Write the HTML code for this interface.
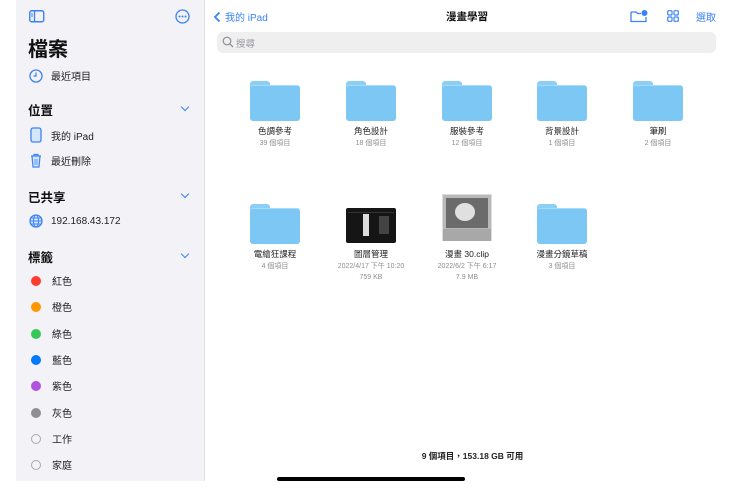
<!DOCTYPE html>
<html><head><meta charset="utf-8"><style>
*{margin:0;padding:0;box-sizing:border-box}
body{width:740px;height:489px;background:#fff;position:relative;overflow:hidden;font-family:"Liberation Sans","Noto Sans CJK TC",sans-serif;color:#111}
.a{position:absolute}
#sb{left:16px;top:0;width:189px;height:481px;background:#f2f2f7;border-right:1px solid #e0e0e5}
.row{position:absolute;left:28px;font-size:10px;color:#222;display:flex;align-items:center}
.hd{position:absolute;left:28px;font-size:12.5px;font-weight:bold;color:#111}
.chev{position:absolute;left:182px;width:6px;height:6px;border-right:1.5px solid #3b82f6;border-bottom:1.5px solid #3b82f6;transform:rotate(45deg)}
.dot{width:10px;height:10px;border-radius:50%;margin-right:11px;margin-left:3px}
.ic{width:15px;margin-right:8px;display:flex;justify-content:center}
.it{position:absolute;width:96px;text-align:center}
.fold{position:relative;width:50px;height:40px;margin:0 auto}
.fold .t{position:absolute;left:0;top:0;width:20px;height:8px;background:#8ccff6;border-radius:3px 3px 0 0}
.fold .b{position:absolute;left:0;top:4px;width:50px;height:36px;background:#7cc7f3;border-radius:3px;border-top:1.5px solid #a6dbf9}
.nm{font-size:8.5px;color:#222;margin-top:4px}
.sub{font-size:7px;color:#8e8e93;margin-top:1px;line-height:11px}
</style></head><body>
<div id="sb" class="a"></div>
<svg class="a" style="left:29px;top:10px" width="16" height="13"><rect x="0.75" y="0.75" width="14" height="11" rx="2" fill="none" stroke="#3b82f6" stroke-width="1.4"/><line x1="5.5" y1="1" x2="5.5" y2="12" stroke="#3b82f6" stroke-width="1.3"/><line x1="2" y1="4" x2="4" y2="4" stroke="#3b82f6"/><line x1="2" y1="6" x2="4" y2="6" stroke="#3b82f6"/></svg>
<svg class="a" style="left:175px;top:9px" width="15" height="15"><circle cx="7.5" cy="7.5" r="6.5" fill="none" stroke="#3b82f6" stroke-width="1.3"/><circle cx="4.5" cy="7.5" r="1" fill="#3b82f6"/><circle cx="7.5" cy="7.5" r="1" fill="#3b82f6"/><circle cx="10.5" cy="7.5" r="1" fill="#3b82f6"/></svg>
<div class="a" style="left:28px;top:33px;font-size:20px;font-weight:bold">檔案</div>
<div class="row" style="top:68px"><span class="ic"><svg width="14" height="14"><circle cx="7" cy="7" r="6" fill="none" stroke="#3b82f6" stroke-width="1.3"/><path d="M7 3.5V7H4.5" fill="none" stroke="#3b82f6" stroke-width="1.2"/></svg></span>最近項目</div>
<div class="hd" style="top:100px">位置</div><div class="chev" style="top:104px"></div>
<div class="row" style="top:127px"><span class="ic"><svg width="12" height="16"><rect x="1" y="1" width="10" height="14" rx="2" fill="#d6e7fc" stroke="#3b82f6" stroke-width="1.3"/></svg></span>我的 iPad</div>
<div class="row" style="top:153px"><span class="ic"><svg width="12" height="15"><path d="M1 3h10M4 3V1.5h4V3M2 3l1 11h6l1-11" fill="#d6e7fc" stroke="#3b82f6" stroke-width="1.2"/><path d="M5 6v6M7 6v6" stroke="#3b82f6" stroke-width=".8"/></svg></span>最近刪除</div>
<div class="hd" style="top:187px">已共享</div><div class="chev" style="top:191px"></div>
<div class="row" style="top:214px"><span class="ic"><svg width="14" height="14"><circle cx="7" cy="7" r="6" fill="#d6e7fc" stroke="#3b82f6" stroke-width="1.3"/><ellipse cx="7" cy="7" rx="2.5" ry="6" fill="none" stroke="#3b82f6"/><path d="M1 7h12M2 4h10M2 10h10" stroke="#3b82f6" stroke-width=".9"/></svg></span>192.168.43.172</div>
<div class="hd" style="top:247px">標籤</div><div class="chev" style="top:251px"></div>
<div class="row" style="top:273px"><span class="dot" style="background:#ff3b30"></span>紅色</div>
<div class="row" style="top:299px"><span class="dot" style="background:#ff9500"></span>橙色</div>
<div class="row" style="top:326px"><span class="dot" style="background:#34c759"></span>綠色</div>
<div class="row" style="top:352px"><span class="dot" style="background:#007aff"></span>藍色</div>
<div class="row" style="top:378px"><span class="dot" style="background:#af52de"></span>紫色</div>
<div class="row" style="top:405px"><span class="dot" style="background:#8e8e93"></span>灰色</div>
<div class="row" style="top:431px"><span class="dot" style="border:1px solid #aaa"></span>工作</div>
<div class="row" style="top:457px"><span class="dot" style="border:1px solid #aaa"></span>家庭</div>

<div class="a" style="left:213px;top:9px;font-size:10px;color:#3b82f6;display:flex;align-items:center"><svg width="9" height="12" style="margin-right:3px"><path d="M6.5 1.5L2 6l4.5 4.5" fill="none" stroke="#3b82f6" stroke-width="1.8"/></svg>我的 iPad</div>
<div class="a" style="left:446px;top:9px;font-size:10.5px;font-weight:bold">漫畫學習</div>
<svg class="a" style="left:630px;top:9px" width="18" height="14"><path d="M1 3h5l1.5 1.5H11M1 3v9.5h15V8" fill="none" stroke="#3b82f6" stroke-width="1.3"/><circle cx="14.5" cy="4" r="3" fill="#3b82f6"/></svg>
<svg class="a" style="left:667px;top:10px" width="12" height="12" fill="none" stroke="#3b82f6" stroke-width="1.2"><rect x=".7" y=".7" width="4.3" height="4.3" rx="1"/><rect x="7" y=".7" width="4.3" height="4.3" rx="1"/><rect x=".7" y="7" width="4.3" height="4.3" rx="1"/><rect x="7" y="7" width="4.3" height="4.3" rx="1"/></svg>
<div class="a" style="left:696px;top:9px;font-size:10px;color:#3b82f6">選取</div>
<div class="a" style="left:217px;top:32px;width:499px;height:21px;background:#efeff0;border-radius:6px"></div>
<svg class="a" style="left:222px;top:36px" width="12" height="12"><circle cx="5" cy="5" r="3.8" fill="none" stroke="#8e8e93" stroke-width="1.2"/><path d="M7.8 7.8L11 11" stroke="#8e8e93" stroke-width="1.3"/></svg>
<div class="a" style="left:236px;top:36px;font-size:9.5px;color:#9a9aa0">搜尋</div>

<div class="it" style="left:227px;top:81px"><div class="fold"><div class="t"></div><div class="b"></div></div><div class="nm">色調參考</div><div class="sub">39 個項目</div></div>
<div class="it" style="left:323px;top:81px"><div class="fold"><div class="t"></div><div class="b"></div></div><div class="nm">角色設計</div><div class="sub">18 個項目</div></div>
<div class="it" style="left:419px;top:81px"><div class="fold"><div class="t"></div><div class="b"></div></div><div class="nm">服裝參考</div><div class="sub">12 個項目</div></div>
<div class="it" style="left:514px;top:81px"><div class="fold"><div class="t"></div><div class="b"></div></div><div class="nm">背景設計</div><div class="sub">1 個項目</div></div>
<div class="it" style="left:610px;top:81px"><div class="fold"><div class="t"></div><div class="b"></div></div><div class="nm">筆刷</div><div class="sub">2 個項目</div></div>

<div class="it" style="left:227px;top:204px"><div class="fold"><div class="t"></div><div class="b"></div></div><div class="nm">電繪狂課程</div><div class="sub">4 個項目</div></div>
<div class="it" style="left:323px;top:204px"><div class="fold"><div style="position:absolute;left:0;top:4px;width:50px;height:35px;background:#151515;border-radius:2px"><div style="position:absolute;left:17px;top:6px;width:6px;height:22px;background:#ddd"></div><div style="position:absolute;left:33px;top:8px;width:10px;height:18px;background:#444"></div><div style="position:absolute;left:2px;top:4px;width:46px;height:1px;background:#333"></div></div></div><div class="nm">圖層管理</div><div class="sub">2022/4/17 下午 10:20<br>759 KB</div></div>
<div class="it" style="left:419px;top:204px"><div class="fold" style="top:-10px;height:50px;margin-bottom:-10px"><div style="position:absolute;left:0;top:0;width:50px;height:47px;background:#b9b9b9;border:1px solid #ddd"><div style="position:absolute;left:3px;top:3px;width:42px;height:30px;background:#6b6b6b"></div><div style="position:absolute;left:12px;top:8px;width:20px;height:18px;background:#e0e0e0;border-radius:50%"></div><div style="position:absolute;left:0;top:34px;width:48px;height:12px;background:#a8a8a8"></div></div></div><div class="nm">漫畫 30.clip</div><div class="sub">2022/6/2 下午 6:17<br>7.9 MB</div></div>
<div class="it" style="left:514px;top:204px"><div class="fold"><div class="t"></div><div class="b"></div></div><div class="nm">漫畫分鏡草稿</div><div class="sub">3 個項目</div></div>

<div class="a" style="left:205px;top:450px;width:535px;text-align:center;font-size:8.5px;font-weight:bold;color:#222">9 個項目，153.18 GB 可用</div>
<div class="a" style="left:277px;top:477px;width:188px;height:4px;background:#000;border-radius:2px"></div>
</body></html>
